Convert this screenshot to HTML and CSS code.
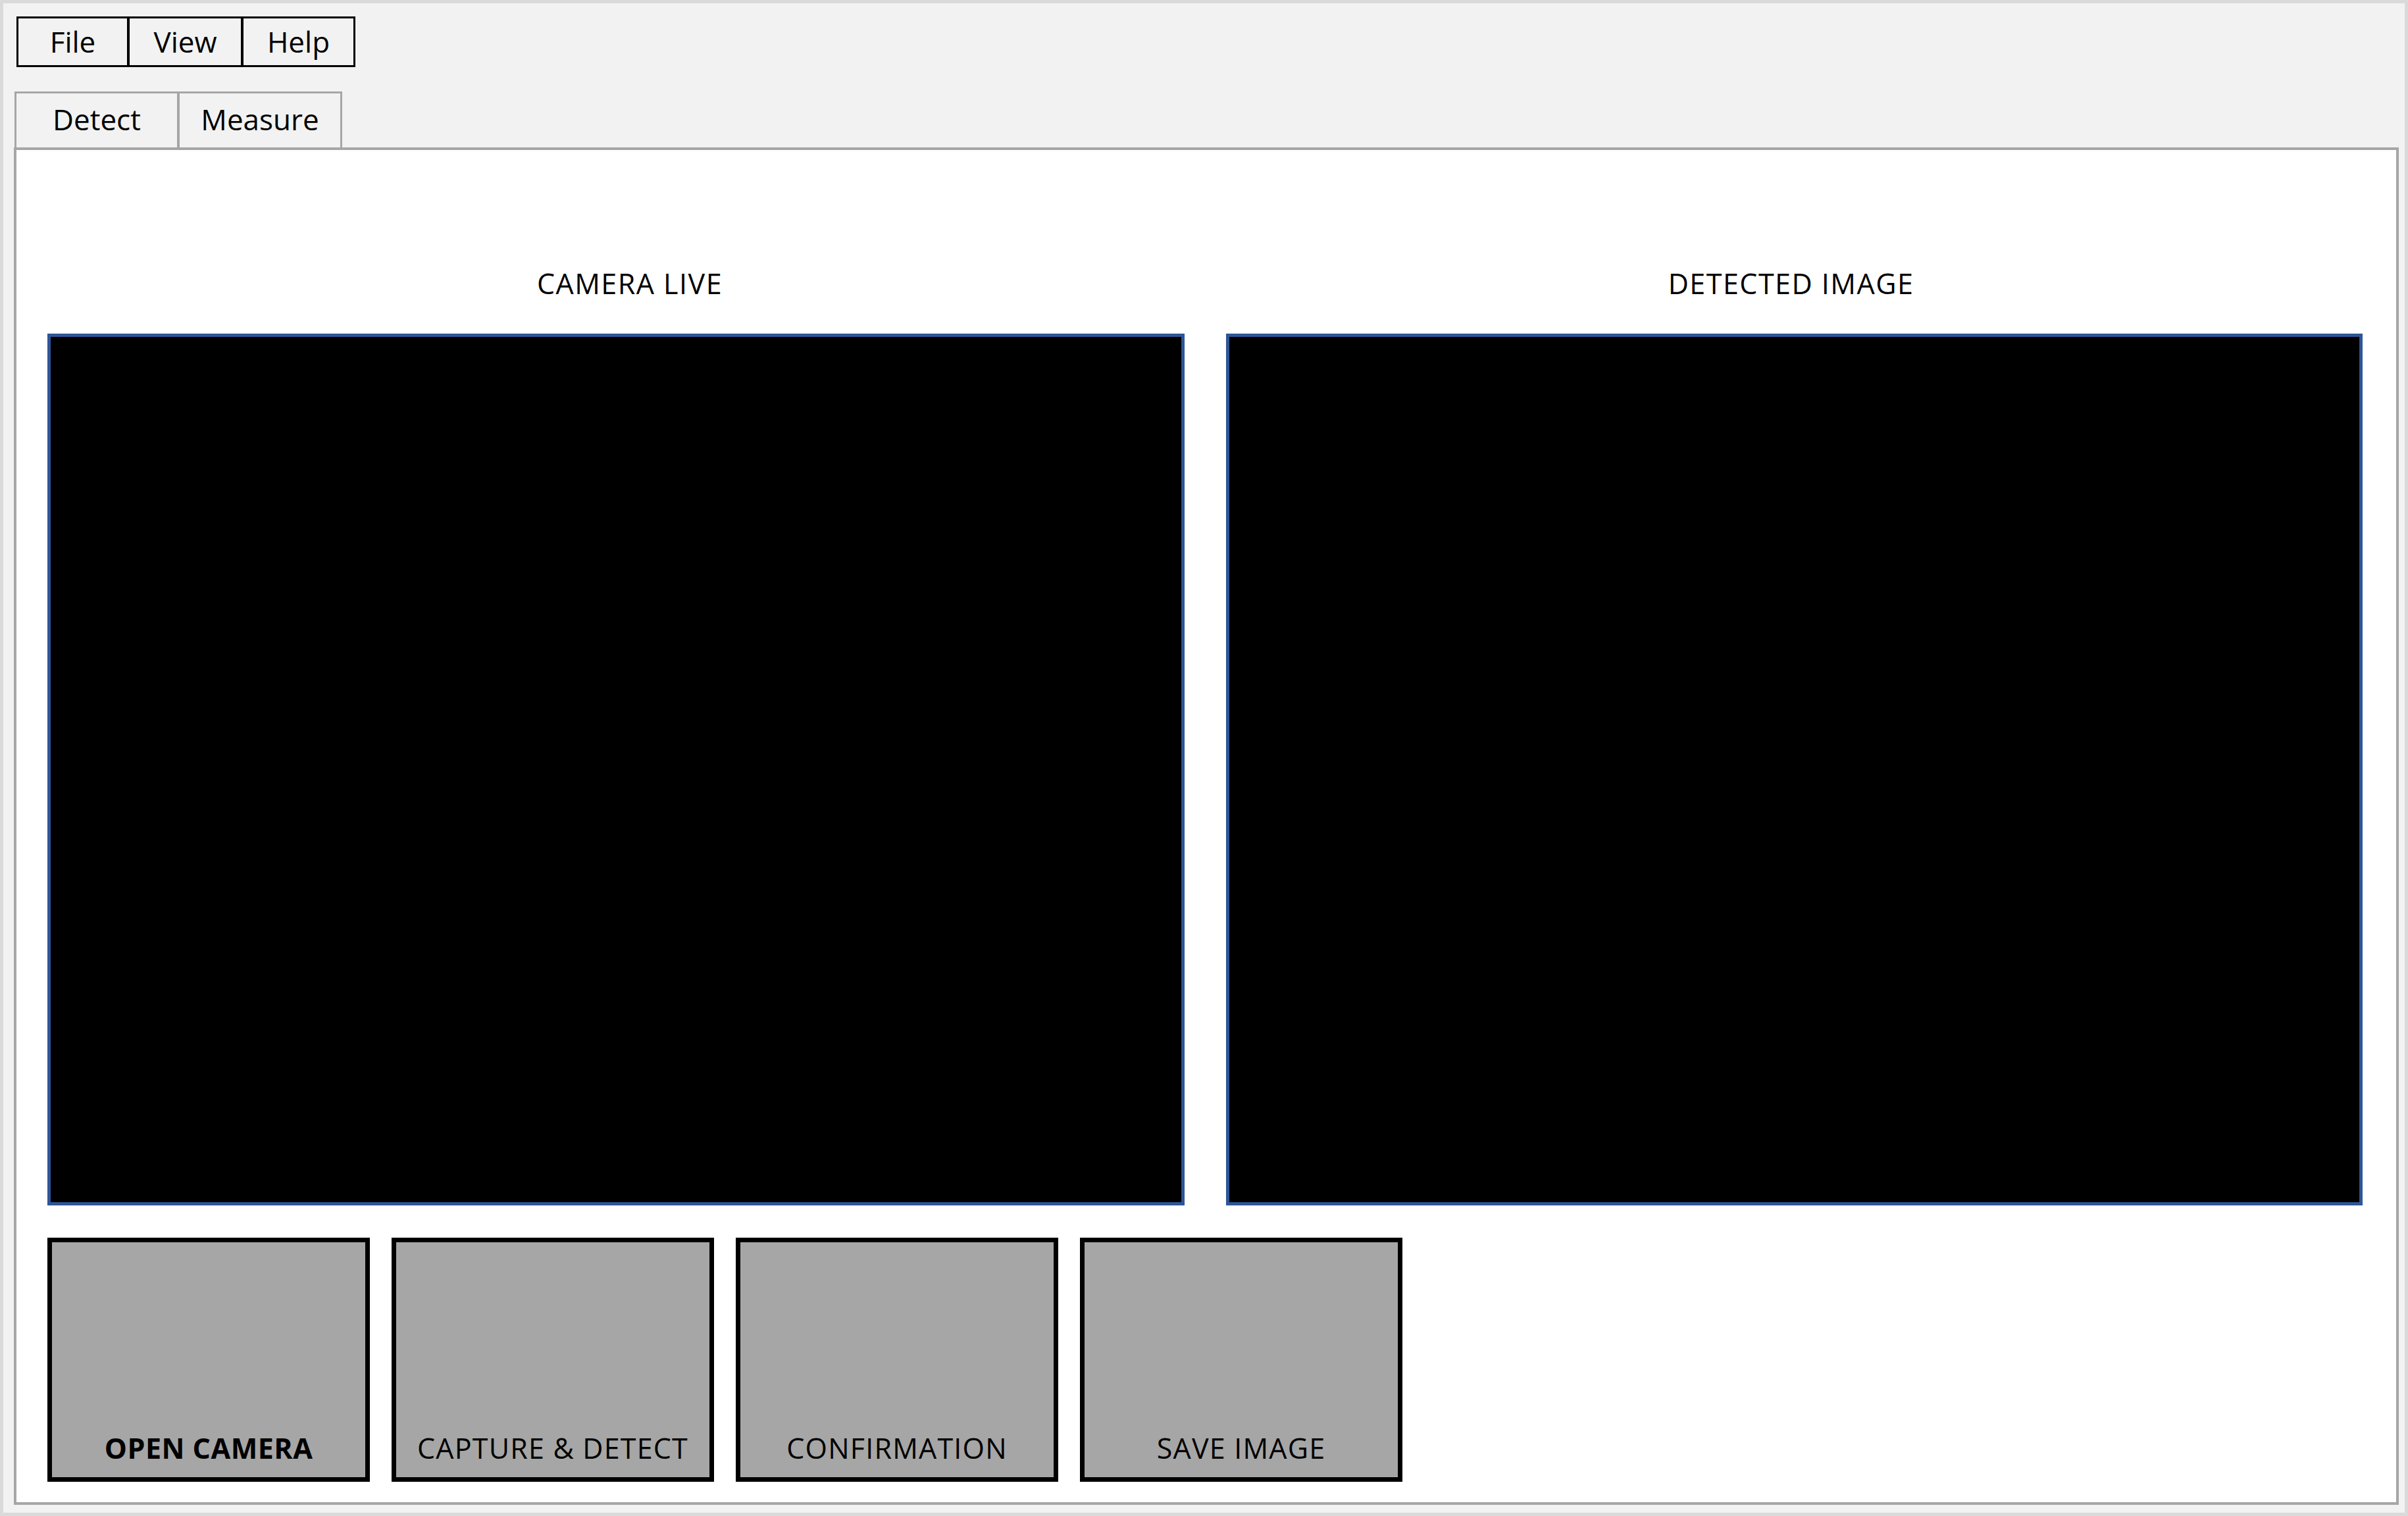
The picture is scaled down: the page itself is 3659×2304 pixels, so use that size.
FILE: index.html
```html
<!DOCTYPE html>
<html>
<head>
<meta charset="utf-8">
<link rel="stylesheet" href="styles.css">
</head>
<body>
<div class="window">
  <div class="menubar">
    <div class="menu-item menu-file">File</div>
    <div class="menu-item menu-view">View</div>
    <div class="menu-item menu-help">Help</div>
  </div>
  <div class="tabs">
    <div class="tab">Detect</div>
    <div class="tab">Measure</div>
  </div>
  <div class="panel">
    <div class="views">
      <div class="view">
        <div class="label label-left">CAMERA LIVE</div>
        <div class="screen"></div>
      </div>
      <div class="view">
        <div class="label label-right">DETECTED IMAGE</div>
        <div class="screen"></div>
      </div>
    </div>
    <div class="buttons">
      <div class="btn btn-bold">OPEN CAMERA</div>
      <div class="btn">CAPTURE &amp; DETECT</div>
      <div class="btn">CONFIRMATION</div>
      <div class="btn">SAVE IMAGE</div>
    </div>
  </div>
</div>
</body>
</html>
```
FILE: styles.css
```css
html, body {
  margin: 0;
  padding: 0;
  background: #f2f2f2;
}
body {
  font-family: "Open Sans", "Noto Sans", "Liberation Sans", sans-serif;
  color: #000;
}
.window {
  box-sizing: border-box;
  width: 3659px;
  height: 2304px;
  border: 5px solid #dadada;
  background: #f2f2f2;
  padding-top: 20px;
  display: flex;
  flex-direction: column;
}
.menubar {
  display: flex;
  margin-left: 20px;
  height: 77px;
}
.menu-item {
  box-sizing: border-box;
  height: 77px;
  border: 3px solid #000;
  font-size: 44px;
  line-height: 71px;
  text-align: center;
}
.menu-item + .menu-item {
  margin-left: -2px;
}
.menu-file { width: 171px; }
.menu-view { width: 175px; }
.menu-help { width: 173px; }

.tabs {
  display: flex;
  margin-left: 17px;
  margin-top: 37px;
  height: 85px;
}
.tab {
  box-sizing: border-box;
  width: 250px;
  height: 85px;
  border: 3px solid #a6a6a6;
  border-bottom: none;
  background: #f2f2f2;
  font-size: 44px;
  line-height: 60px;
  padding-top: 9px;
  text-align: center;
}
.tab + .tab {
  margin-left: -2px;
}

.panel {
  margin-left: 16px;
  margin-right: 9px;
  height: 2063px;
  box-sizing: border-box;
  border: 4px solid #a6a6a6;
  background: #fff;
  padding: 174px 50px 0 47px;
  display: flex;
  flex-direction: column;
}
.views {
  display: grid;
  grid-template-columns: 1728px 1727px;
  column-gap: 63px;
}
.view {
  display: flex;
  flex-direction: column;
}
.label {
  font-size: 43px;
  letter-spacing: 1.5px;
  line-height: 57px;
  height: 57px;
  text-align: center;
  margin-bottom: 48px;
  white-space: nowrap;
}
.label-left {
  padding-left: 42px;
}
.label-right {
  padding-right: 10px;
}
.screen {
  box-sizing: border-box;
  height: 1325px;
  background: #000;
  border: 5px solid #2f5597;
}
.buttons {
  display: flex;
  gap: 33px;
  margin-top: 49px;
}
.btn {
  box-sizing: border-box;
  width: 490px;
  height: 371px;
  border: 7px solid #000;
  background: #a6a6a6;
  display: flex;
  align-items: flex-end;
  justify-content: center;
  padding-bottom: 16px;
  font-size: 43px;
  letter-spacing: 1.2px;
  line-height: 57px;
  white-space: nowrap;
}
.btn-bold {
  font-weight: 700;
  letter-spacing: 0.5px;
}
```
